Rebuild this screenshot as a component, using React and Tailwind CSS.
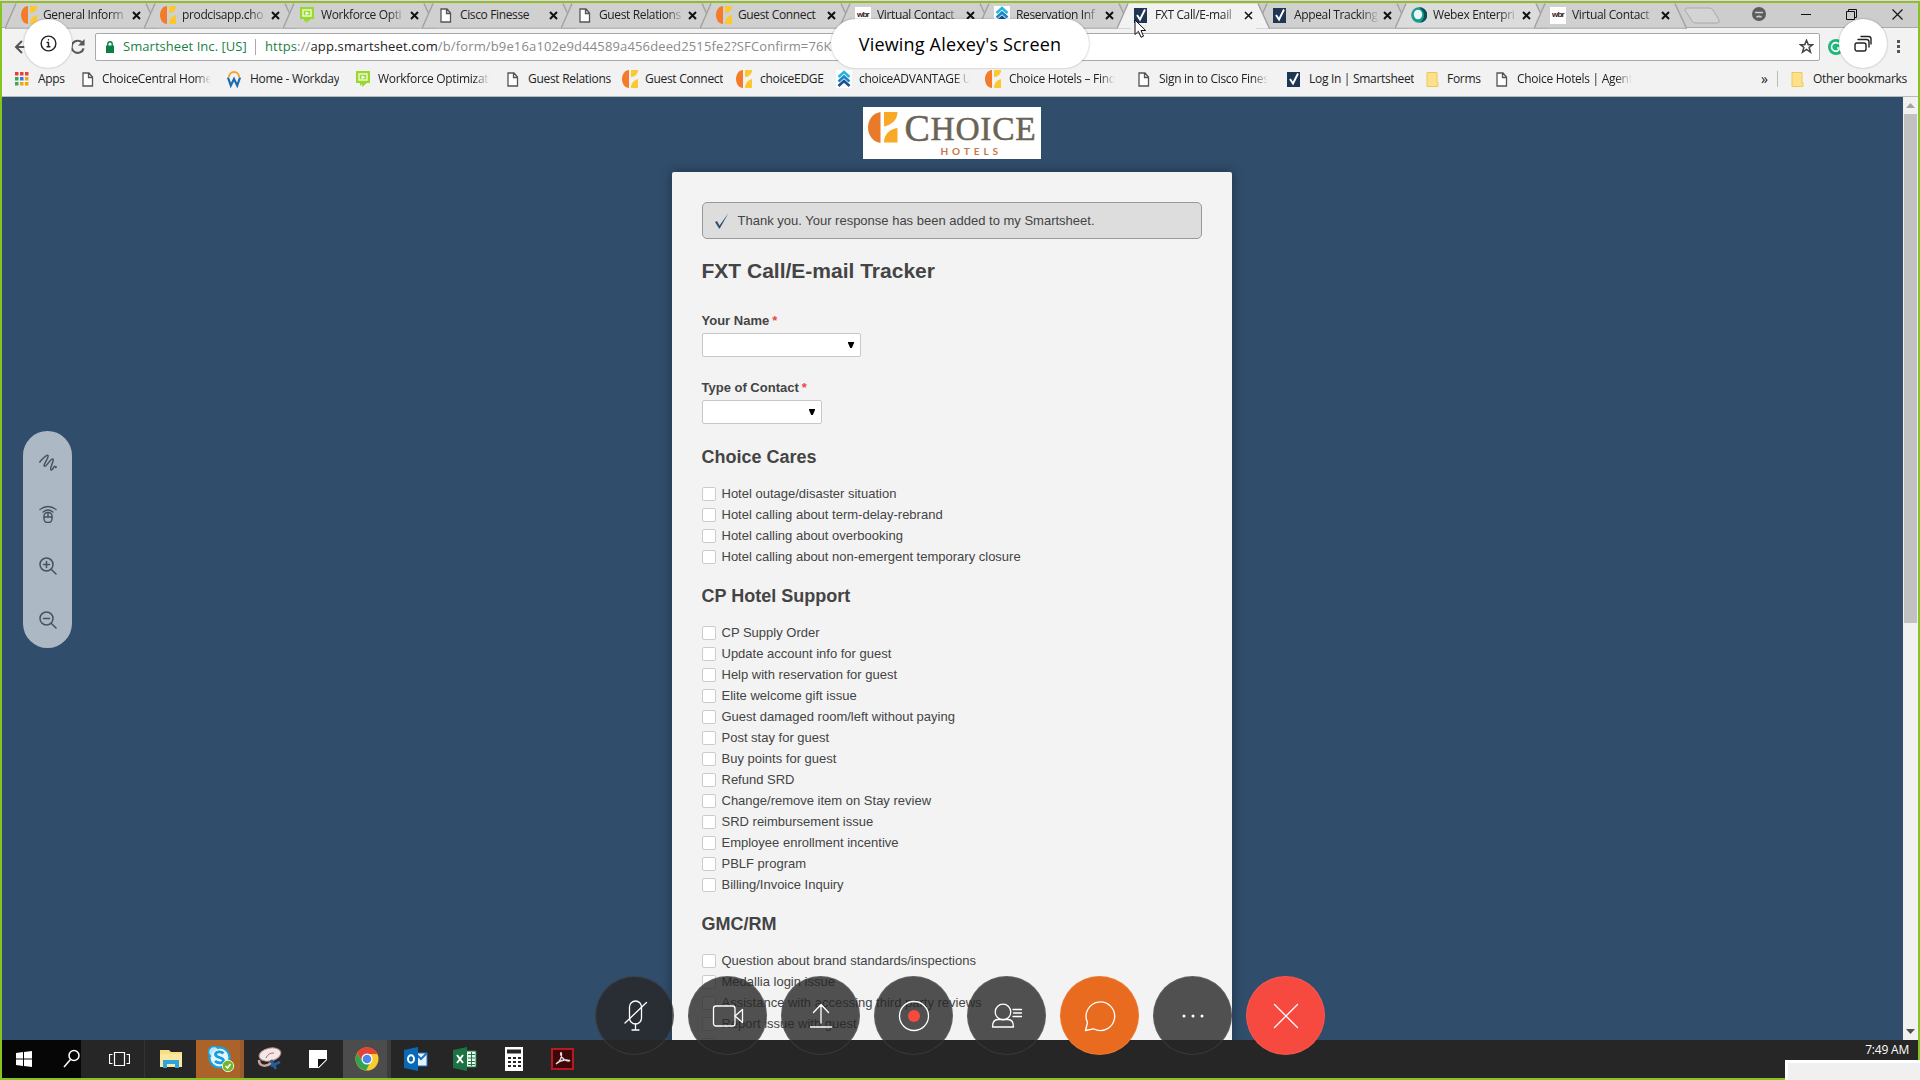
import React from "react";

const Choice = ({ w = 16 }) => (
  <svg width={w} height="18" viewBox="0 0 16 18" className="shrink-0">
    <path d="M7 0v18C3 18 0 14 0 9s3-9 7-9z" fill="#f47b29" />
    <path d="M9 0h7c0 4-3 7-7 7z" fill="#fbc82f" />
    <path d="M16 9v9H9c0-5 3-8 7-9z" fill="#fbc82f" />
  </svg>
);
const FileI = () => (
  <svg width="16" height="18" viewBox="0 0 16 18" className="shrink-0">
    <path d="M3 3h6l3.500 4v9H3z M8.500 3v4.500h4" fill="#fff" stroke="#555" strokeWidth="1.3" />
  </svg>
);
const Workforce = () => (
  <svg width="16" height="18" viewBox="0 0 16 18" className="shrink-0">
    <path d="M1 1h14v12h-3l-5 4v-3l-2 2v-3H1z" fill="#9bd82c" />
    <path d="M4 4h8v6H4z" fill="none" stroke="#e9f9cf" strokeWidth="1.5" />
    <path d="M6.5 5.5l4 1.7-4 2z" fill="#fff" />
  </svg>
);
const Wbr = () => (
  <span className="flex h-[17px] w-4 shrink-0 items-center justify-center bg-white font-['Liberation_Sans'] text-[8px] font-black tracking-[-0.8px] text-[#3a1420]">wbr</span>
);
const Adv = () => (
  <svg width="16" height="18" viewBox="0 0 16 18" className="shrink-0">
    <rect width="16" height="18" fill="#fff" />
    <path d="M2.5 7L8 2l5.500 5" fill="none" stroke="#29b5e2" strokeWidth="2.6" />
    <path d="M2.500 11.500L8 6.500l5.500 5" fill="none" stroke="#1b86c6" strokeWidth="2.600" />
    <path d="M2.500 16L8 11l5.500 5" fill="none" stroke="#1c4f91" strokeWidth="2.600" />
  </svg>
);
const Smart = () => (
  <svg width="16" height="18" viewBox="0 0 16 18" className="shrink-0">
    <rect x="1" y="2" width="13" height="15" fill="#1e3553" />
    <path d="M4 9l3 4.500 5-10" fill="none" stroke="#fff" strokeWidth="1.900" />
  </svg>
);
const Webex = () => (
  <svg width="16" height="18" viewBox="0 0 16 18" className="shrink-0">
    <circle cx="8" cy="9" r="7.800" fill="#189a91" />
    <path d="M8 1.200A7.800 7.800 0 0 1 9 16.800C15 12 14 5 8 1.200z" fill="#0b4f55" />
    <ellipse cx="7" cy="8.500" rx="4.200" ry="4.800" fill="#e9f8f4" />
  </svg>
);
const Workday = () => (
  <svg width="14" height="18" viewBox="0 0 14 18" className="mr-[2px] shrink-0">
    <path d="M2 7a5 5 0 0 1 10 0" fill="none" stroke="#f2a52c" strokeWidth="2" />
    <path d="M1 7.500l2.800 8L7 9l3.200 6.500 2.800-8" fill="none" stroke="#1a6db0" strokeWidth="2.200" />
  </svg>
);
const Folder = () => (
  <svg width="16" height="18" viewBox="0 0 16 18" className="shrink-0">
    <path d="M2 2.500h10v10h1v4H2z" fill="#fde08a" stroke="#efc75b" />
  </svg>
);
const AppsI = () => (
  <svg width="14" height="14" viewBox="0 0 14 14" className="shrink-0">
    {["#e8403a", "#e8403a", "#e8403a", "#3aa757", "#2f7de1", "#f2a60c", "#3aa757", "#f2a60c", "#f2a60c"].map((c, i) => (
      <rect key={i} x={(i % 3) * 5} y={Math.floor(i / 3) * 5} width="3.500" height="3.500" fill={c} />
    ))}
  </svg>
);

const tabs = [
  [Choice, "General Inform"], [Choice, "prodcisapp.cho"], [Workforce, "Workforce Opti"], [FileI, "Cisco Finesse"],
  [FileI, "Guest Relations"], [Choice, "Guest Connect"], [Wbr, "Virtual Contact"], [Adv, "Reservation Inf"],
  [Smart, "FXT Call/E-mail"], [Smart, "Appeal Tracking"], [Webex, "Webex Enterpri"], [Wbr, "Virtual Contact"],
];

function Tab({ Icon, label, active, light }) {
  const fill = active ? "#f2f2f2" : light ? "#dcdcdc" : "#d0d0d0";
  return (
    <div className={`relative flex h-[25px] w-[139px] shrink-0 items-center pb-[1px] pl-[16px] ${active ? "z-10" : ""}`}>
      <svg className="absolute top-0 left-0" width="153" height="26" viewBox="0 0 153 26">
        <path d="M0 25.500L11 .5h130l11.500 25z" fill={fill} />
        <path d="M0 25.500L11 .5M141 .5l11.500 25" fill="none" stroke="#a3a3a3" strokeWidth="1.500" />
        {!active && <path d="M0 25.200h153" stroke="#a9a9a9" />}
      </svg>
      <div className="relative flex items-center">
        <Icon />
        <span className={`ml-[6px] w-[86px] overflow-hidden whitespace-nowrap text-[12px] tracking-[-0.36px] ${label === "Cisco Finesse" || label === "Guest Connect" ? "" : "[mask-image:linear-gradient(to_right,#000_78%,transparent_99%)]"}`}>{label}</span>
        <svg width="9" height="9" viewBox="0 0 9 9" className="ml-[3px]"><path d="M1 1l7 7M8 1L1 8" stroke="#111" strokeWidth={active ? "1.500" : "2"} /></svg>
      </div>
    </div>
  );
}

const marks = [
  [AppsI, "Apps", "w-[65px]", "ml-[9px]"],
  [FileI, "ChoiceCentral Home", "w-[147px]", "ml-[6px]", true],
  [Workday, "Home - Workday", "w-[128px]", "ml-[7px]"],
  [Workforce, "Workforce Optimizati", "w-[150px]", "ml-[7px]", true],
  [FileI, "Guest Relations", "w-[117px]", "ml-[7px]"],
  [Choice, "Guest Connect", "w-[114px]", "ml-[7px]"],
  [Choice, "choiceEDGE", "w-[100px]", "ml-[8px]"],
  [Adv, "choiceADVANTAGE U", "w-[149px]", "ml-[7px]", true],
  [Choice, "Choice Hotels – Find", "w-[151px]", "ml-[8px]", true],
  [FileI, "Sign in to Cisco Fines", "w-[150px]", "ml-[7px]", true],
  [Smart, "Log In | Smartsheet", "w-[139px]", "ml-[7px]"],
  [Folder, "Forms", "w-[69px]", "ml-[6px]"],
  [FileI, "Choice Hotels | Agent", "w-[146px]", "ml-[7px]", true],
];

function Bookmark({ Icon, label, width, gap, fade }) {
  return (
    <div className={`flex shrink-0 items-center ${width}`}>
      <Icon />
      <span className={`overflow-hidden whitespace-nowrap text-[12px] tracking-[-0.3px] ${gap} ${fade ? "mr-[6px] [mask-image:linear-gradient(to_right,#000_85%,transparent_99%)]" : ""}`}>{label}</span>
    </div>
  );
}

const groups = [
  ["Choice Cares", ["Hotel outage/disaster situation", "Hotel calling about term-delay-rebrand", "Hotel calling about overbooking", "Hotel calling about non-emergent temporary closure"]],
  ["CP Hotel Support", ["CP Supply Order", "Update account info for guest", "Help with reservation for guest", "Elite welcome gift issue", "Guest damaged room/left without paying", "Post stay for guest", "Buy points for guest", "Refund SRD", "Change/remove item on Stay review", "SRD reimbursement issue", "Employee enrollment incentive", "PBLF program", "Billing/Invoice Inquiry"]],
  ["GMC/RM", ["Question about brand standards/inspections", "Medallia login issue", "Assistance with accessing third party reviews", "Report issue with guest", ""]],
];

const Select = ({ width }) => (
  <div className={`flex h-6 items-center justify-end rounded-[2px] border border-[#c8c8c8] bg-white pr-[6px] ${width}`}>
    <svg width="6" height="6" viewBox="0 0 6 6"><path d="M0 0h6v1L3.800 6H2.200L0 1z" fill="#000" /></svg>
  </div>
);

function Form() {
  return (
    <div className="flex h-[943px] flex-1 flex-col items-center overflow-hidden bg-[#304d6b] pt-[10px] pr-[2px] font-['Liberation_Sans',Arial,sans-serif] text-[#444]">
      <div className="flex h-[52px] w-[178px] shrink-0 bg-white pt-[5px] pl-[5px]">
        <svg width="30" height="31" viewBox="0 0 30 31" className="shrink-0">
          <path d="M12.500 0v31C5 30 0 23 0 15.500S5 1 12.500 0z" fill="#e97a2a" />
          <path d="M16 0h13.500c0 8-6 13-13.500 14.500z" fill="#f9a926" />
          <path d="M29.500 16v14.500H16C16 22 22 17 29.500 16z" fill="#f9a926" />
        </svg>
        <div className="ml-[7px] flex flex-col font-['Liberation_Serif',serif] text-[#6b6354]">
          <div className="flex h-[33px] items-end whitespace-nowrap tracking-[0.7px] [-webkit-text-stroke:0.5px_#6b6354]"><span className="text-[38px] leading-[33px]">C</span><span className="text-[33.5px] leading-[33px]">HOICE</span></div>
          <div className="-mt-px pl-[36px] font-[Lato,sans-serif] text-[10px] leading-[14px] font-bold tracking-[3.900px] text-[#c5784a]">HOTELS</div>
        </div>
      </div>
      <div className="mt-[13px] h-[900px] w-[560px] shrink-0 rounded-t-[2px] bg-[#f3f3f3] px-[30px] pt-[30px] shadow-[0_0_12px_rgba(0,0,0,0.35)]">
        <div className="flex h-[37px] items-center rounded-[5px] border border-[#999] bg-[#ddd] pl-[12px]">
          <svg width="16" height="18" viewBox="0 0 16 18"><path d="M0 10l2-1 2.500 4.500L13.500 1 4.800 16.500H4z" fill="#34506f" /></svg>
          <span className="ml-[7px] text-[13px]">Thank you. Your response has been added to my Smartsheet.</span>
        </div>
        <h1 className="mt-[18px] h-[28px] text-[21px] leading-[28px] font-bold">FXT Call/E-mail Tracker</h1>
        <div className="mt-[27px] flex h-[21px] gap-[3px] text-[13px] leading-[17px] font-bold">Your Name <span className="text-[#e8474c]">*</span></div>
        <Select width="w-[159px]" />
        <div className="mt-[22px] flex h-[21px] gap-[3px] text-[13px] leading-[17px] font-bold">Type of Contact <span className="text-[#e8474c]">*</span></div>
        <Select width="w-[120px]" />
        <div className="pt-[5px]">
          {groups.map(([title, items]) => (
            <section key={title}>
              <h2 className="h-[55px] pt-[17px] text-[18px] leading-[22px] font-bold">{title}</h2>
              {items.map((t, i) => (
                <div key={i} className="flex h-[21px] items-start">
                  <span className="mt-[3px] h-[14px] w-[14px] rounded-[2px] border border-[#ccc] bg-white" />
                  <span className="ml-[6px] text-[13px] leading-[20px]">{t}</span>
                </div>
              ))}
            </section>
          ))}
        </div>
      </div>
    </div>
  );
}

const S = ({ children, size = 32, sw = 1.3, vb = "0 0 32 32", stroke = "#fff" }) => (
  <svg width={size} height={size} viewBox={vb} fill="none" stroke={stroke} strokeWidth={sw} strokeLinecap="round" strokeLinejoin="round">{children}</svg>
);

const calls = [
  ["bg-[rgba(39,39,39,0.8)]", <><rect x="10.500" y="1" width="12" height="23" rx="6" /><path d="M6 23L27.500 2.500M16.500 24v6M13 30h7" /></>],
  ["bg-[rgba(39,39,39,0.8)]", <><rect x="1.500" y="6" width="21.500" height="20" rx="2.500" /><path d="M23 16l7.500-6.500v13z" /></>],
  ["bg-[rgba(39,39,39,0.8)]", <path d="M16 23V5M8.500 12.500L16 4.500l7.500 8M5.500 27h21" />],
  ["bg-[rgba(39,39,39,0.8)]", <><circle cx="16" cy="16" r="14.500" /><circle cx="16" cy="16" r="6" fill="#f8493f" stroke="none" /></>],
  ["bg-[rgba(39,39,39,0.8)]", <><circle cx="12" cy="12" r="7.800" /><path d="M1.500 27c0-5 2-7.500 5.500-7.500h10c3.500 0 5.500 2.500 5.500 7.500zM22 9.500h8.500M22.500 13h8M22 16.500h8.500" /></>],
  ["bg-[#e96b1f]", <path d="M1.500 30.500l2-8A14.300 14.300 0 1 1 9.500 28.800z" />],
  ["bg-[rgba(39,39,39,0.8)]", <g fill="#fff" stroke="none"><circle cx="7" cy="16" r="1.500" /><circle cx="16" cy="16" r="1.500" /><circle cx="25" cy="16" r="1.500" /></g>],
  ["bg-[#f6493f]", <path d="M4.500 4.500l23 23M27.500 4.500l-23 23" />],
];

const task = [
  ["w-[79px] bg-[#060606]", <div className="flex w-full items-center pl-[14px]"><svg width="16" height="16" viewBox="0 0 16 16"><path d="M0 2l7-1v6.500H0zM8 .9L16 0v7.500H8zM0 8.500h7V15l-7-1zM8 8.500h8V16l-8-1z" fill="#fff" /></svg><svg width="17" height="20" viewBox="0 0 17 20" className="ml-[31px]" fill="none" stroke="#fff" strokeWidth="1.500"><circle cx="11" cy="6.500" r="5" /><path d="M7.500 10.500L1 18" /></svg></div>],
  ["w-[64px] border-r border-[#333] pl-[14px]", <svg width="21" height="16" viewBox="0 0 21 16" fill="none" stroke="#fff" strokeWidth="1.200"><path d="M5.500 1.500h10v13h-10zM3.500 3.500h-3v9h3M17.500 3.500h3v9h-3" /></svg>],
  ["w-[51px]", <svg width="22" height="20" viewBox="0 0 22 20"><path d="M0 1h9l2 2h11v15H0z" fill="#f7dd83" /><path d="M0 5h22v13H0z" fill="#fbe8a0" /><path d="M3 19v-8h16v8h-4v-4H7v4z" fill="#2ea4dc" /></svg>],
  ["w-[48px] bg-[#ac632a] border-r-4 border-[#985b2e]", <svg width="28" height="28" viewBox="0 0 28 28" className="ml-[5px]"><circle cx="12.500" cy="12.500" r="10" fill="#d9f1fb" stroke="#18a4e0" strokeWidth="2" /><circle cx="7" cy="7" r="5.500" fill="#b9e5f7" stroke="#18a4e0" strokeWidth="1.500" /><circle cx="12.500" cy="12.500" r="8.500" fill="#e6f6fd" /><path d="M16.500 8.500c-2.500-2.500-8-2-8 1 0 3.500 8 2.500 8 6 0 3-6 3-8.500.5" fill="none" stroke="#189fd9" strokeWidth="2.800" /><circle cx="21" cy="21" r="5.700" fill="#70b52c" stroke="#e6f5d5" /><path d="M18.500 21l2 2 3-4" fill="none" stroke="#fff" strokeWidth="1.500" /></svg>],
  ["w-[51px]", <svg width="25" height="24" viewBox="0 0 25 24"><ellipse cx="13" cy="7.500" rx="11" ry="6.500" fill="#f1e8e8" stroke="#bd8484" transform="rotate(-12 13 7.500)" /><path d="M9 11c2-4 4-5 8-5" stroke="#b55" strokeWidth="1" fill="none" /><path d="M2 13c0 7 8 7 12 3" stroke="#c9a2a2" strokeWidth="2.500" fill="none" /><path d="M14 13l5 9M23 15l-9 4" stroke="#235f9d" strokeWidth="2.600" /></svg>],
  ["w-[48px] pr-[2px]", <svg width="18" height="18" viewBox="0 0 18 18"><path d="M0 0h18v10l-8 8H0z" fill="#fff" /><path d="M9 9h8.500L9 17.500z" fill="#141414" /></svg>],
  ["w-[48px] bg-[#4c4c4c] border-r-4 border-[#3c3c3c]", <svg width="24" height="24" viewBox="0 0 24 24" className="ml-[4px]"><circle cx="12" cy="12" r="11.500" fill="#f9cc2d" /><path d="M2 6.300A11.500 11.500 0 0 1 22.500 7H12l-5 7z" fill="#e24436" /><path d="M2 6.300A11.500 11.500 0 0 0 11 23.500L16 14 7 14z" fill="#34a350" /><circle cx="12" cy="12" r="5.500" fill="#fff" /><circle cx="12" cy="12" r="4.300" fill="#4b87ec" /></svg>],
  ["w-[49px]", <svg width="24" height="24" viewBox="0 0 24 24"><path d="M12 6h11v13H12z" fill="#e8f2fb" stroke="#1774c6" /><path d="M12 7l5 5 6-6" fill="none" stroke="#1774c6" strokeWidth="2" /><path d="M0 3l14-3v24L0 21z" fill="#0a69b7" /><ellipse cx="7" cy="12" rx="3" ry="3.800" fill="none" stroke="#fff" strokeWidth="2" /></svg>],
  ["w-[49px]", <svg width="24" height="24" viewBox="0 0 24 24"><path d="M12 4h11v16H12z" fill="#edf7f0" stroke="#1f7a48" /><path d="M15 7.500h7M15 11h7M15 14.500h7M15 17.500h7M18.500 5v14" stroke="#1f7a48" /><path d="M0 3l14-3v24L0 21z" fill="#1d7244" /><path d="M4 8l6 8M10 8l-6 8" stroke="#fff" strokeWidth="2" /></svg>],
  ["w-[49px]", <svg width="18" height="24" viewBox="0 0 18 24"><path d="M0 0h18v24H0z" fill="#fff" /><path d="M2 2.500h14v4H2z" fill="#262626" /><path d="M3 11h3M8 11h3M13 11h3M3 15h3M8 15h3M13 15h3M3 19h3M8 19h3M13 19h3" stroke="#262626" strokeWidth="2" /></svg>],
  ["w-[49px]", <svg width="23" height="22" viewBox="0 0 23 22"><rect x="1" y="1" width="21" height="20" fill="#3d0608" stroke="#b51a20" strokeWidth="2" /><path d="M5 16c4-2 6-7 5.500-10.500-.5-2-1.500 0-.5 2 2 4 4.500 5.500 7.500 5.500s0-1.500-4-1-7.500 3-8.500 4z" fill="none" stroke="#e8dcdc" strokeWidth="1.300" /></svg>],
];

export default function App() {
  return (
    <div className="relative flex h-[1080px] w-[1920px] flex-col overflow-hidden border-t border-[#f3c8f3] bg-[#f2f2f2] font-['Open_Sans','Noto_Sans',sans-serif] text-[#222]">
      <div className="flex h-[1079px] flex-col border-2 border-[#84c61f]">
        <div className="flex h-[25px] shrink-0 items-start bg-[#cdcdcd] pl-[3px] shadow-[inset_0_-1px_0_#a9a9a9]">
          {tabs.map(([Icon, label], i) => <Tab key={i} Icon={Icon} label={label} active={i === 8} light={i === 10} />)}
          <svg width="46" height="25" viewBox="0 0 46 25" className="ml-[10px] shrink-0"><path d="M2 7q0-2 2-2h22q3 0 4 2l6 10q1 3-2 3H13q-3 0-4-2z" fill="#d4d4d4" stroke="#aaa" /></svg>
          <div className="flex flex-1 items-center justify-end gap-[35px] self-stretch pr-[15px] pb-[3px]">
            <svg width="14" height="14" viewBox="0 0 14 14"><circle cx="7" cy="7" r="7" fill="#5c5c5c" /><path d="M3 5.500h8M4.500 10c2-1 3-1 5 0" stroke="#cdcdcd" strokeWidth="1.600" fill="none" /></svg>
            <svg width="10" height="10" viewBox="0 0 10 10"><path d="M0 5.500h10" stroke="#111" /></svg>
            <svg width="11" height="11" viewBox="0 0 11 11" fill="none" stroke="#111"><path d="M.5 2.500h8v8h-8zM2.500 2.500v-2h8v8h-2" /></svg>
            <svg width="11" height="11" viewBox="0 0 11 11"><path d="M.5.5l10 10M10.500.5l-10 10" stroke="#111" strokeWidth="1.100" /></svg>
          </div>
        </div>
        <div className="flex h-[37px] shrink-0 items-center bg-[#f2f2f2] pl-[12px]">
          <svg width="16" height="16" viewBox="0 0 16 16" fill="none" stroke="#555" strokeWidth="2"><path d="M8 2L2 8l6 6M2 8h14" /></svg>
          <svg width="15" height="15" viewBox="0 0 16 16" fill="none" stroke="#5a5a5a" strokeWidth="2.200" className="ml-[40px]"><path d="M13.500 4.500A6.500 6.500 0 1 0 14.500 10" /><path d="M15.500 0v7H8.500z" fill="#5a5a5a" stroke="none" /></svg>
          <div className="ml-[10px] flex h-[28px] w-[1725px] items-center rounded-[2px] border border-[#a9a9a9] bg-white pl-[10px] text-[13px] whitespace-nowrap">
            <svg width="8" height="12" viewBox="0 0 8 12"><path d="M0 4.500h8V12H0z" fill="#0b8043" /><path d="M1.800 5V3a2.200 2.200 0 0 1 4.400 0v2" fill="none" stroke="#0b8043" strokeWidth="1.400" /></svg>
            <span className="ml-[9px] w-[132px] pt-[1px] tracking-[0.05px] text-[#1c7f45]">Smartsheet Inc. [US]</span>
            <span className="h-[16px] w-px bg-[#aaa]" />
            <span className="ml-[9px] pt-[1px] tracking-[0.14px] text-[#8a8a8a]"><span className="text-[#1c7f45]">https</span>://<span className="text-[#222]">app.smartsheet.com</span>/b/form/b9e16a102e9d44589a456deed2515fe2?SFConfirm=76K</span>
            <svg width="15" height="15" viewBox="0 0 24 24" className="mr-[5px] ml-auto" fill="none" stroke="#444" strokeWidth="2.400"><path d="M12 2l2.800 7H22l-5.800 4.600 2.200 7.400-6.400-4.400L5.600 21l2.200-7.400L2 9h7.200z" /></svg>
          </div>
          <svg width="16" height="16" viewBox="0 0 16 16" className="ml-[8px]"><circle cx="8" cy="8" r="8" fill="#1db87a" /><path d="M11 5a4.300 4.300 0 1 0 1 4H9" fill="none" stroke="#fff" strokeWidth="1.600" /></svg>
          <svg width="4" height="14" viewBox="0 0 4 14" className="ml-[53px]" fill="#555"><rect y="0" width="3" height="3" /><rect y="5" width="3" height="3" /><rect y="10" width="3" height="3" /></svg>
        </div>
        <div className="flex h-[32px] shrink-0 items-center border-b border-[#b9b9b9] bg-[#f2f2f2] pb-[3px] pl-[13px]">
          {marks.map(([Icon, label, width, gap, fade]) => <Bookmark key={label} Icon={Icon} label={label} width={width} gap={gap} fade={fade} />)}
          <span className="ml-auto text-[14px] leading-none">»</span>
          <span className="mr-[12px] ml-[9px] h-[16px] w-px bg-[#bbb]" />
          <Folder />
          <span className="mr-[11px] ml-[7px] text-[12px] tracking-[-0.3px]">Other bookmarks</span>
        </div>
        <div className="flex h-[943px] shrink-0">
          <Form />
          <div className="flex w-[15px] flex-col items-center bg-[#f1f1f1]">
            <svg width="9" height="5" viewBox="0 0 9 5" className="mt-[6px]"><path d="M4.500 0L9 5H0z" fill="#a3a3a3" /></svg>
            <div className="mt-[6px] h-[509px] w-[13px] bg-[#c1c1c1]" />
            <svg width="9" height="5" viewBox="0 0 9 5" className="mt-auto mb-[6px]"><path d="M4.500 5L9 0H0z" fill="#505050" /></svg>
          </div>
        </div>
        <div className="flex h-[38px] shrink-0 bg-[#262626]">
          {task.map(([c, icon], i) => <div key={i} className={`flex shrink-0 items-center justify-center ${c}`}>{icon}</div>)}
          <span className="mt-[1px] mr-[9px] ml-auto text-[12px] tracking-[-0.2px] text-white">7:49 AM</span>
        </div>
      </div>

      <div className="absolute right-0 bottom-0 h-[20px] w-[135px] border-t-[3px] border-l-[3px] border-white bg-[#f0f0f0]" />
      <div className="absolute top-[18px] left-[24px] flex h-[49px] w-[48px] items-center justify-center rounded-full bg-white shadow-[0_0_2px_rgba(0,0,0,0.35)]">
        <S size={17} vb="0 0 18 18" stroke="#222" sw={1.500}><circle cx="9" cy="9" r="7.800" /><path d="M7.500 8H9v4.500M7.500 12.500h3M9 5v.2" /></S>
      </div>
      <div className="absolute top-[18px] left-[831px] flex h-[49px] w-[258px] items-center justify-center rounded-full bg-white pt-[2px] text-[18px] tracking-[0.18px] whitespace-nowrap text-black shadow-[0_0_2px_rgba(0,0,0,0.35)]">Viewing Alexey's Screen</div>
      <div className="absolute top-[18px] left-[1839px] flex h-[49px] w-[48px] items-center justify-center rounded-full bg-white shadow-[0_0_2px_rgba(0,0,0,0.35)]">
        <S size={18} vb="0 0 18 18" stroke="#222" sw={1.400}><rect x="1" y="8" width="11" height="8" rx="2" /><path d="M4 4.500h8.500q2.500 0 2.500 2.500v5M7 1.500h7.500q2.500 0 2.500 2.500v5" /></S>
      </div>
      <svg className="absolute top-[18px] left-[1134px] z-20" width="13" height="20" viewBox="0 0 13 20"><path d="M1 1v14.500l3.400-3.200 2.600 6 2.500-1.100L7 11.500h4.700z" fill="#fff" stroke="#111" /></svg>
      <div className="absolute top-[430px] left-[23px] flex h-[217px] w-[49px] flex-col items-center rounded-full bg-[#adb8c5] pt-[23px] pl-[1px]">
        <S size={18} vb="0 0 18 18" stroke="#47525e" sw={1.500}><path d="M.8 8C3 5 8 .5 9 1.500 10.500 3 3.500 11.200 5.500 12.300 7.500 13.300 12 3.500 14 5 15.500 6.500 10 14.500 12 15.800 13.500 16.800 14.500 12.300 15.700 12.300 16.600 12.300 16 14.300 17.400 13" /></S>
        <div className="mt-[33px]"><S size={18} vb="0 0 18 18" stroke="#47525e" sw={1.400}><path d="M1 4.500q8-6 16 0M4 7q5-4 10 0" /><rect x="5" y="7.500" width="8" height="10" rx="3.500" /><path d="M5 12h8M9 8.500V12" /></S></div>
        <div className="mt-[34px]"><S size={18} vb="0 0 18 18" stroke="#47525e" sw={1.500}><circle cx="7.500" cy="7.500" r="6.500" /><path d="M12.200 12.200L17 17M4.500 7.500h6M7.500 4.500v6" /></S></div>
        <div className="mt-[36px]"><S size={18} vb="0 0 18 18" stroke="#47525e" sw={1.500}><circle cx="7.500" cy="7.500" r="6.500" /><path d="M12.200 12.200L17 17M4.500 7.500h6" /></S></div>
      </div>
      <div className="absolute top-[975px] left-[595px] flex gap-[14px]">
        {calls.map(([c, icon], i) => <div key={i} className={`flex h-[79px] w-[79px] items-center justify-center rounded-full shadow-[inset_0_0_0_1px_rgba(255,255,255,0.09)] ${c}`}><S>{icon}</S></div>)}
      </div>
    </div>
  );
}
